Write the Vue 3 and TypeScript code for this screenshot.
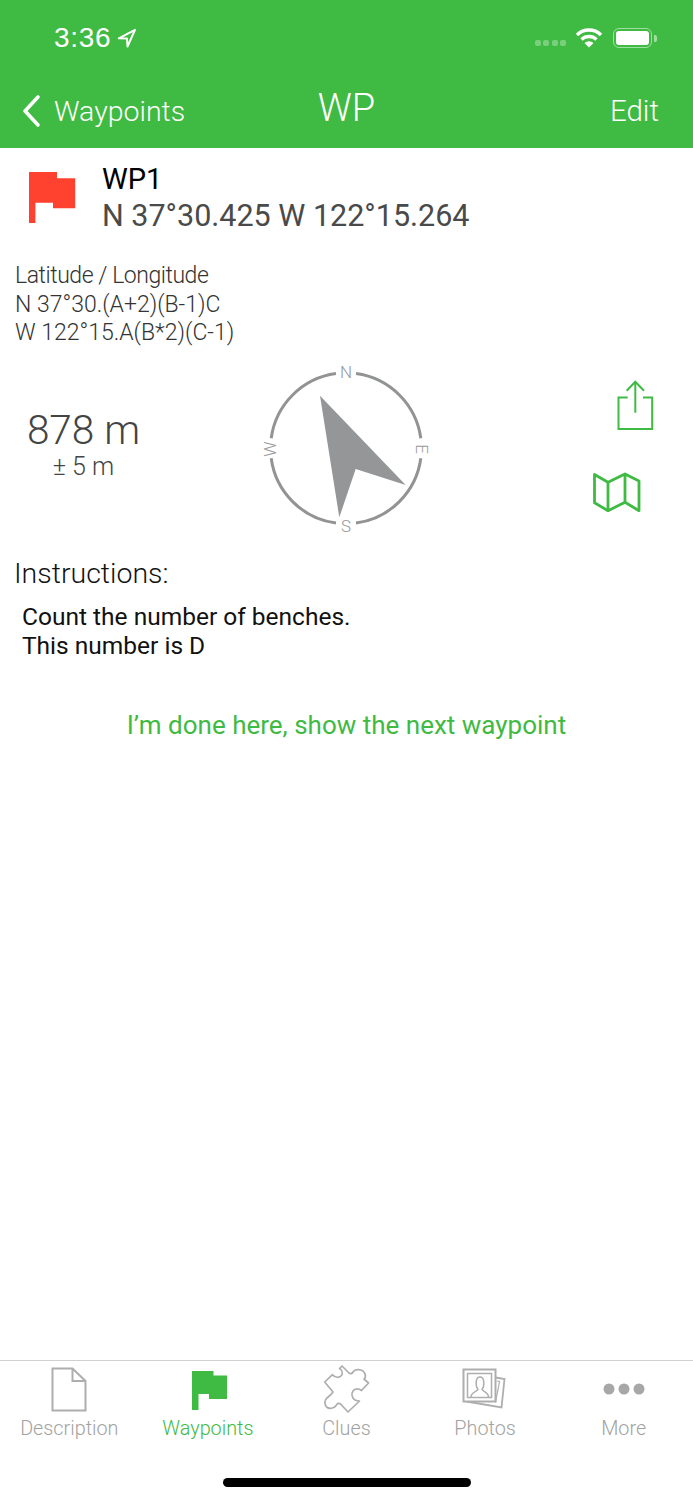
<script setup lang="ts">
const tabs = [
  { label: 'Description', icon: 'doc' },
  { label: 'Waypoints', icon: 'flag', active: true },
  { label: 'Clues', icon: 'puzzle' },
  { label: 'Photos', icon: 'photos' },
  { label: 'More', icon: 'more' },
]
</script>

<template>
  <div class="screen">
    <header class="header">
      <div class="status">
        <div class="clock">
          <span>3:36</span>
          <svg class="loc" width="20" height="20" viewBox="0 0 20 20">
            <path d="M18 1.800 L1.800 10.300 L10 10.500 L10.500 18.500 Z" fill="none" stroke="#fff" stroke-width="2" stroke-linejoin="round" />
          </svg>
        </div>
        <div class="status-right">
          <div class="signal"><i></i><i></i><i></i><i></i></div>
          <svg width="28" height="22" viewBox="0 0 28 22">
            <path d="M2 8 A17 17 0 0 1 26 8" fill="none" stroke="#fff" stroke-width="3.400" />
            <path d="M6.500 12.500 A11 11 0 0 1 21.500 12.500" fill="none" stroke="#fff" stroke-width="3.400" />
            <path d="M14 20.500 L9.500 16 A6.500 6.500 0 0 1 18.500 16 Z" fill="#fff" />
          </svg>
          <div class="battery"><div class="battery-fill"></div></div>
          <div class="battery-cap"></div>
        </div>
      </div>
      <div class="nav">
        <div class="nav-back">
          <svg width="22" height="34" viewBox="0 0 22 34">
            <path d="M18 3 L5 17 L18 31" fill="none" stroke="#fff" stroke-width="3.600" stroke-linecap="round" stroke-linejoin="round" />
          </svg>
          <span>Waypoints</span>
        </div>
        <div class="nav-title">WP</div>
        <div class="nav-edit">Edit</div>
      </div>
    </header>

    <main class="content">
      <section class="wp-head">
        <svg class="wp-flag" width="47" height="51" viewBox="0 0 47 51">
          <path d="M0 0 H28 V6.300 H46.200 V36.300 H24 V30.700 H6.400 V51 H0 Z" fill="#ff4230" />
        </svg>
        <div>
          <div class="wp-name">WP1</div>
          <div class="wp-coords">N 37°30.425 W 122°15.264</div>
        </div>
      </section>

      <section class="formula">
        <div class="formula-label">Latitude / Longitude</div>
        <div>N 37°30.(A+2)(B-1)C</div>
        <div>W 122°15.A(B*2)(C-1)</div>
      </section>

      <section class="nav-row">
        <div class="distance">
          <div class="dist-main">878 m</div>
          <div class="dist-err">± 5 m</div>
        </div>
        <svg class="compass" width="190" height="190" viewBox="0 0 190 190">
          <g fill="none" stroke="#929394" stroke-width="3">
            <path d="M106 18.500 A75.500 75.500 0 0 1 170.800 83.300" />
            <path d="M170.800 103.300 A75.500 75.500 0 0 1 106 168.100" />
            <path d="M86 168.100 A75.500 75.500 0 0 1 21.200 103.300" />
            <path d="M21.200 83.300 A75.500 75.500 0 0 1 86 18.500" />
          </g>
          <path d="M70 40.700 L155.700 130 L105.700 114 L89.300 162.300 Z" fill="#959697" />
          <g class="compass-letters" text-anchor="middle">
            <text x="96" y="23">N</text>
            <text x="96" y="176.500">S</text>
            <text transform="translate(172.300 94) rotate(90)" y="6">E</text>
            <text transform="translate(20 94) rotate(-90)" y="6">W</text>
          </g>
        </svg>
        <div class="actions">
          <svg class="share" width="38" height="51" viewBox="0 0 38 51">
            <g fill="none" stroke="#3fba42" stroke-width="2">
              <path d="M11.700 17.500 H2.500 V49 H36.200 V17.500 H27" />
              <path d="M19.300 32.700 V2" />
              <path d="M10.700 10.700 L19.300 1.700 L28 10.700" />
            </g>
          </svg>
          <svg class="map" width="49" height="41" viewBox="0 0 49 41">
            <g fill="none" stroke="#3fba42" stroke-width="2.800" stroke-linejoin="round">
              <path d="M2.500 2.500 L16 10.300 L33 2 L47 9 V38.700 L33 30.300 L16 38.700 L2.500 30.700 Z" />
              <path d="M16 10.300 V38.700" />
              <path d="M33 2 V30.300" />
            </g>
          </svg>
        </div>
      </section>

      <section class="instructions">
        <div class="inst-title">Instructions:</div>
        <div class="inst-body">
          <div>Count the number of benches.</div>
          <div>This number is D</div>
        </div>
      </section>

      <div class="next">I’m done here, show the next waypoint</div>
    </main>

    <footer class="tabbar">
      <div class="tabs">
        <div v-for="tab in tabs" :key="tab.label" class="tab" :class="{ active: tab.active }">
          <div class="tab-icon">
            <svg v-if="tab.icon === 'doc'" width="36" height="45" viewBox="0 0 36 45">
              <path d="M1.500 1.500 H21.500 L34.500 14 V43.500 H1.500 Z" fill="none" stroke="#aeaeae" stroke-width="2" />
              <path d="M21.500 1.500 V14 H34.500" fill="none" stroke="#aeaeae" stroke-width="2" />
            </svg>
            <svg v-else-if="tab.icon === 'flag'" class="flag-icon" width="35" height="39" viewBox="0 0 35 39">
              <path d="M0 0 H21.500 V4.500 H35 V28 H17 V23 H6.500 V39 H0 Z" fill="#3fba42" />
            </svg>
            <svg v-else-if="tab.icon === 'puzzle'" class="shift-icon" width="54" height="54" viewBox="0 0 54 54">
              <path d="M24 4 L31 11 C32 12 34 12 35 10 C37 7 42 7 45 9 C48 12 48 15 46 17 L50.500 21 L43.500 28.500 C41 26.500 37 26 35 29 C33 32 34 36 37 38 C38 38.500 40 39 41.500 39 L30 50 L23 42.500 C21 41 19.500 41 18.500 43 C16 47 11 47 8.500 45 C6 42 6.500 38 9 36 C11 34 13 33 15 30 L6.700 20 L14.500 12.700 C17 16 21.500 16 23.500 13.500 C25 11 24 8 21.500 6.500 Z" fill="none" stroke="#aeaeae" stroke-width="1.700" stroke-linejoin="round" />
            </svg>
            <svg v-else-if="tab.icon === 'photos'" class="shift-icon" width="52" height="50" viewBox="0 0 52 50">
              <path d="M37.500 13.500 L46.500 15 L43.500 43.500 L8.500 37.500" fill="none" stroke="#aeaeae" stroke-width="1.800" />
              <path d="M39 17 L41.500 17.500 L37.500 38.500" fill="none" stroke="#aeaeae" stroke-width="1.200" />
              <rect x="5.500" y="5.500" width="32" height="32" fill="#fff" stroke="#aeaeae" stroke-width="2" />
              <rect x="9.500" y="9.500" width="24" height="24" fill="none" stroke="#aeaeae" stroke-width="1.500" />
              <path d="M13 33 C13 28 19 27.500 20 25.500 C17.500 22.500 17 13 22 13 C27 13 26.500 22.500 24 25.500 C25 27.500 30.500 28 30.500 33" fill="none" stroke="#aeaeae" stroke-width="1.500" />
            </svg>
            <svg v-else width="42" height="14" viewBox="0 0 42 14">
              <circle cx="6" cy="7" r="5.500" fill="#a7a7a7" />
              <circle cx="21" cy="7" r="5.500" fill="#a7a7a7" />
              <circle cx="36" cy="7" r="5.500" fill="#a7a7a7" />
            </svg>
          </div>
          <div class="tab-label">{{ tab.label }}</div>
        </div>
      </div>
      <div class="home-indicator"></div>
    </footer>
  </div>
</template>

<style>
html,
body {
  margin: 0;
  background: #fff;
}
</style>

<style scoped>
.screen {
  width: 693px;
  height: 1500px;
  display: flex;
  flex-direction: column;
  font-family: Roboto, "Liberation Sans", sans-serif;
  background: #fff;
  overflow: hidden;
}

.header {
  height: 148px;
  background: #3fba42;
  color: #fff;
  display: flex;
  flex-direction: column;
}

.status {
  height: 76px;
  padding: 0 36px 0 54px;
  display: flex;
  align-items: center;
  justify-content: space-between;
}

.clock {
  display: flex;
  align-items: center;
  gap: 6px;
  font-family: "Liberation Sans", sans-serif;
  font-size: 28px;
  letter-spacing: 0.7px;
}

.status-right {
  display: flex;
  align-items: center;
}

.signal {
  display: flex;
  gap: 2.300px;
  margin: 9px 9px 0 0;
}

.signal i {
  width: 6px;
  height: 6px;
  border-radius: 2px;
  background: rgba(255, 255, 255, 0.3);
}

.battery {
  box-sizing: border-box;
  margin-left: 10px;
  width: 39px;
  height: 20px;
  padding: 2px;
  border: 1.500px solid rgba(255, 255, 255, 0.5);
  border-radius: 6px;
}

.battery-fill {
  height: 100%;
  border-radius: 3px;
  background: #fff;
}

.battery-cap {
  width: 3px;
  height: 7px;
  margin-left: 2px;
  border-radius: 0 2px 2px 0;
  background: rgba(255, 255, 255, 0.5);
}

.nav {
  flex: 1;
  position: relative;
  padding: 0 34px 0 20px;
  display: flex;
  align-items: center;
  justify-content: space-between;
  font-size: 28.500px;
  font-weight: 300;
}

.nav-back {
  display: flex;
  align-items: center;
  gap: 12px;
  margin-top: -2px;
}

.nav-edit {
  font-size: 29.500px;
  margin-top: -2px;
}

.nav-title {
  position: absolute;
  left: 0;
  right: 0;
  top: 10px;
  text-align: center;
  font-size: 38px;
  font-weight: 300;
}

.content {
  flex: 1;
}

.wp-head {
  display: flex;
  padding: 14px 0 0 29px;
}

.wp-flag {
  margin: 10px 26px 0 0;
}

.wp-name {
  font-size: 29px;
  line-height: 34px;
  color: #000;
}

.wp-coords {
  font-size: 30.500px;
  line-height: 40px;
  color: #4a4a4a;
}

.formula {
  margin-top: 26px;
  padding-left: 15px;
  font-size: 23px;
  line-height: 28.500px;
  font-weight: 300;
  color: #333;
}

.formula-label {
  letter-spacing: -0.45px;
}

.nav-row {
  display: grid;
  grid-template-columns: 250px 190px 1fr;
  margin-top: 7.500px;
  height: 202px;
}

.distance {
  width: 167px;
  padding-top: 52px;
  text-align: center;
  color: #444;
}

.dist-main {
  font-size: 40.500px;
  line-height: 46px;
  font-weight: 300;
}

.dist-err {
  font-size: 25px;
  line-height: 28px;
  font-weight: 300;
}

.compass-letters {
  font-size: 17px;
  font-weight: 300;
  fill: #999;
}

.actions {
  display: flex;
  flex-direction: column;
  align-items: flex-end;
  padding: 25px 39px 0 0;
}

.share {
  display: block;
}

.map {
  display: block;
  margin: 41px 13px 0 0;
}

.instructions {
  padding-left: 14px;
}

.inst-title {
  font-size: 28.500px;
  line-height: 34px;
  font-weight: 300;
  color: #111;
}

.inst-body {
  margin-top: 12px;
  padding-left: 8px;
  font-size: 24.500px;
  line-height: 28.500px;
  color: #111;
}

.next {
  margin-top: 50px;
  text-align: center;
  font-size: 26px;
  line-height: 30px;
  color: #3fba42;
}

.tabbar {
  height: 140px;
  border-top: 1px solid #d0d0d0;
  box-sizing: border-box;
  background: #fff;
}

.tabs {
  display: flex;
  height: 100px;
}

.tab {
  flex: 1;
  display: flex;
  flex-direction: column;
  align-items: center;
  color: #a2a2a2;
}

.tab.active {
  color: #3fba42;
}

.tab-icon {
  height: 54px;
  margin-top: 1px;
  display: flex;
  align-items: center;
  justify-content: center;
}

.shift-icon {
  margin-left: -2px;
}

.flag-icon {
  margin: 2px 0 0 3px;
}

.tab-label {
  font-size: 19.800px;
  line-height: 26px;
  font-weight: 300;
}

.home-indicator {
  width: 248px;
  height: 9px;
  margin: 17px auto 0;
  border-radius: 5px;
  background: #000;
}
</style>
